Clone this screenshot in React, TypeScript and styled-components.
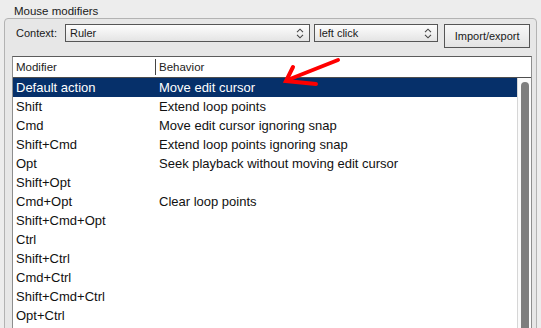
import styled, { createGlobalStyle } from 'styled-components';

// ─── Global ─────────────────────────────────────────────────────────

const Global = createGlobalStyle`
  html, body {
    margin: 0;
    padding: 0;
    background: #ededed;
    font-family: "Liberation Sans", Arial, Helvetica, sans-serif;
    color: #111;
  }
`;

// ─── Styled components ──────────────────────────────────────────────

const Page = styled.div`
  position: relative;
  width: 541px;
  height: 328px;
  overflow: hidden;
  background: #ededed;
`;

const Title = styled.div`
  padding: 4px 0 0 14px;
  height: 14px;
  font-size: 11.5px;
  line-height: 14px;
  color: #1a1a1a;
`;

const Group = styled.div`
  margin-left: 4px;
  width: 533px;
  height: 400px;
  padding: 5px 6px 0 7px;
  box-sizing: border-box;
  border: 1px solid #b3b3b3;
  border-radius: 4px 4px 0 0;
  background: #e7e7e7;
`;

const Toolbar = styled.div`
  display: flex;
  align-items: flex-start;
  height: 24px;
  padding-left: 4px;
`;

const Label = styled.span`
  font-size: 11px;
  line-height: 18px;
  margin-right: 8px;
  color: #1a1a1a;
`;

const Dropdown = styled.div<{ $width: number; $gap: number }>`
  display: flex;
  align-items: center;
  justify-content: space-between;
  box-sizing: border-box;
  width: ${({ $width }) => $width}px;
  height: 18px;
  margin-right: ${({ $gap }) => $gap}px;
  padding: 0 5px 0 4px;
  border: 1px solid #565656;
  background: linear-gradient(#fdfdfd, #e4e4e4);
  font-size: 11px;
  line-height: 16px;
  color: #1a1a1a;
`;

const Button = styled.div`
  display: flex;
  align-items: center;
  justify-content: center;
  box-sizing: border-box;
  width: 87px;
  height: 24px;
  border: 1px solid #555;
  background: linear-gradient(#f8f8f8, #e3e3e3);
  font-size: 11px;
  color: #1a1a1a;
`;

const List = styled.div`
  margin-top: 8px;
  width: 520px;
  box-sizing: border-box;
  border: 1px solid #8e8e8e;
  border-top-color: #5c5c5c;
  background: #fff;
`;

const Header = styled.div`
  display: flex;
  align-items: center;
  height: 20px;
  border-bottom: 1px solid #4e4e4e;
  font-size: 11.5px;
  color: #222;
`;

const HeadCell = styled.div<{ $width?: number }>`
  ${({ $width }) => ($width ? `width: ${$width}px;` : 'flex: 1;')}
  box-sizing: border-box;
  padding-left: 3px;
`;

const Divider = styled.div`
  width: 1px;
  height: 16px;
  background: #444;
`;

const Body = styled.div`
  display: flex;
  height: 300px;
`;

const Rows = styled.div`
  flex: 1;
`;

const Row = styled.div<{ $selected?: boolean }>`
  display: flex;
  box-sizing: border-box;
  height: 19px;
  padding-top: 1px;
  line-height: 18px;
  font-size: 13px;
  background: ${({ $selected }) => ($selected ? '#06306a' : 'transparent')};
  color: ${({ $selected }) => ($selected ? '#fff' : '#111')};
`;

const Cell = styled.div<{ $width?: number }>`
  ${({ $width }) => ($width ? `width: ${$width}px;` : 'flex: 1;')}
  box-sizing: border-box;
  padding-left: 3px;
  white-space: nowrap;
`;

const Scrollbar = styled.div`
  width: 14px;
  box-sizing: border-box;
  border-left: 1px solid #d6d6d6;
  background: #fafafa;
  padding: 4px 0 0 3px;
`;

const Thumb = styled.div`
  width: 8px;
  height: 400px;
  border-radius: 4px;
  background: #7e7e7e;
`;

const Arrow = styled.svg`
  position: absolute;
  left: 278px;
  top: 54px;
`;

// ─── Data ───────────────────────────────────────────────────────────

const rows: [string, string][] = [
  ['Default action', 'Move edit cursor'],
  ['Shift', 'Extend loop points'],
  ['Cmd', 'Move edit cursor ignoring snap'],
  ['Shift+Cmd', 'Extend loop points ignoring snap'],
  ['Opt', 'Seek playback without moving edit cursor'],
  ['Shift+Opt', ''],
  ['Cmd+Opt', 'Clear loop points'],
  ['Shift+Cmd+Opt', ''],
  ['Ctrl', ''],
  ['Shift+Ctrl', ''],
  ['Cmd+Ctrl', ''],
  ['Shift+Cmd+Ctrl', ''],
  ['Opt+Ctrl', ''],
];

// ─── Component ──────────────────────────────────────────────────────

function Chevrons() {
  return (
    <svg width="8" height="11" viewBox="0 0 8 11" fill="none" stroke="#444" strokeWidth="1.1">
      <path d="M1 4.2 L4 1.2 L7 4.2" />
      <path d="M1 6.8 L4 9.8 L7 6.8" />
    </svg>
  );
}

export default function App() {
  return (
    <Page>
      <Global />
      <Title>Mouse modifiers</Title>
      <Group>
        <Toolbar>
          <Label>Context:</Label>
          <Dropdown $width={249} $gap={4}>
            Ruler
            <Chevrons />
          </Dropdown>
          <Dropdown $width={126} $gap={6}>
            left click
            <Chevrons />
          </Dropdown>
          <Button>Import/export</Button>
        </Toolbar>
        <List>
          <Header>
            <HeadCell $width={142}>Modifier</HeadCell>
            <Divider />
            <HeadCell>Behavior</HeadCell>
          </Header>
          <Body>
            <Rows>
              {rows.map(([mod, beh], i) => (
                <Row key={mod} $selected={i === 0}>
                  <Cell $width={143}>{mod}</Cell>
                  <Cell>{beh}</Cell>
                </Row>
              ))}
            </Rows>
            <Scrollbar>
              <Thumb />
            </Scrollbar>
          </Body>
        </List>
      </Group>
      <Arrow width="66" height="36" viewBox="278 54 66 36">
        <g stroke="#ff0000" strokeWidth="4" strokeLinecap="round" fill="none">
          <path d="M338 60 L290 79" />
          <path d="M293 67 L286 81 L316 84" />
        </g>
      </Arrow>
    </Page>
  );
}
